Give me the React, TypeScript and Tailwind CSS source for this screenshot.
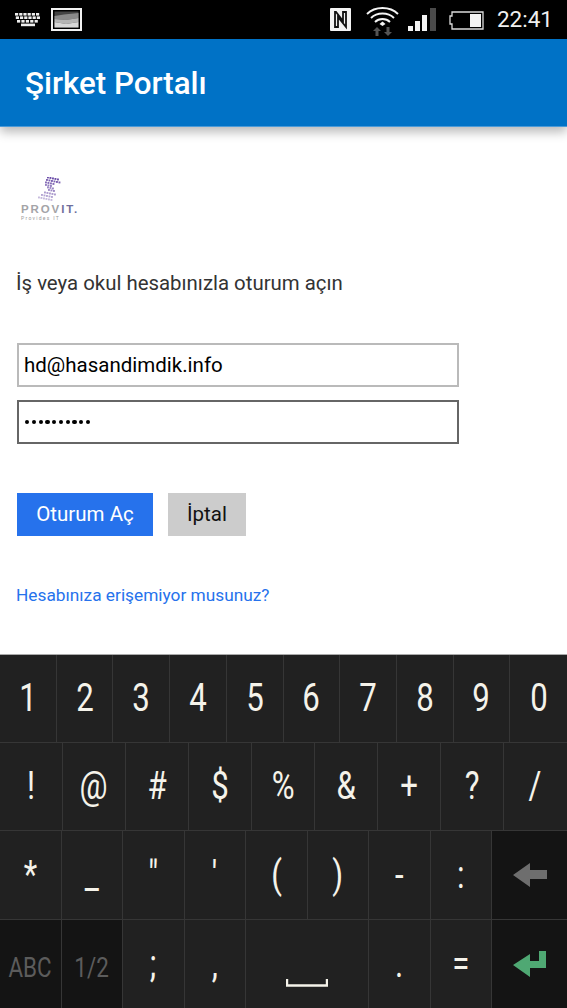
const ROW1 = ["1", "2", "3", "4", "5", "6", "7", "8", "9", "0"];
const ROW2 = ["!", "@", "#", "$", "%", "&", "+", "?", "/"];
const ROW3 = ["*", "_", '"', "'", "(", ")", "-", ":"];

function Key({ label, className = "" }: { label: React.ReactNode; className?: string }) {
  return (
    <div className={`flex items-center justify-center border-r border-[#363636] last:border-r-0 ${className}`}>
      <span className="inline-block scale-x-[0.8] text-[39px] leading-none text-[#f5f3ea]">{label}</span>
    </div>
  );
}

function KeyboardIcon() {
  const dots = [];
  for (let row = 0; row < 2; row++) {
    for (let col = 0; col < 6; col++) {
      dots.push(<rect key={`${row}-${col}`} x={col * 4.2 + row * 0.8} y={row * 3.4} width="3.2" height="2.6" fill="#eee" />);
    }
  }
  return (
    <svg width="28" height="14" viewBox="0 0 26 14">
      {dots}
      <rect x="2" y="7" width="3.2" height="2.6" fill="#eee" />
      <rect x="6.4" y="7" width="3.2" height="2.6" fill="#eee" />
      <rect x="10.8" y="7" width="3.2" height="2.6" fill="#eee" />
      <rect x="15.2" y="7" width="3.2" height="2.6" fill="#eee" />
      <rect x="19.6" y="7" width="3.2" height="2.6" fill="#eee" />
      <rect x="6" y="10.6" width="14" height="2.6" fill="#eee" />
    </svg>
  );
}

function PictureIcon() {
  return (
    <svg width="31" height="23" viewBox="0 0 31 23" className="ml-[9px]">
      <rect x="1" y="1" width="29" height="21" fill="#000" stroke="#f2f2f2" strokeWidth="2" />
      <rect x="3.5" y="3.5" width="24" height="16" fill="#444" />
      <path d="M3.5 8 L13 6.5 L27.5 5 V10 L15 12 L3.5 11 Z" fill="#8a8a8a" />
      <path d="M3.5 11 L15 12 L27.5 10 V14 L15 16 L3.5 14 Z" fill="#b5b5b5" />
      <path d="M3.5 14 L15 16 L27.5 14 V19.5 H3.5 Z" fill="#d8d8d8" />
    </svg>
  );
}

function StatusIcons() {
  return (
    <div className="flex items-center">
      {/* NFC */}
      <svg width="21" height="23" viewBox="0 0 21 23">
        <rect x="0" y="0" width="21" height="23" rx="1" fill="#f4f4f4" />
        <path d="M5 4 V19 H8 V9 L16 19 V4 H13 V13 L6 4 Z" fill="none" stroke="#111" strokeWidth="1.8" />
      </svg>
      {/* wifi + data arrows */}
      <svg width="33" height="32" viewBox="0 0 33 32" className="ml-[15px]">
        <g fill="none" stroke="#f4f4f4" strokeWidth="1.9">
          <path d="M1 10 C9 2 24 2 32 10" />
          <path d="M5 14 C11 8 22 8 28 14" />
          <path d="M9 18 C13 14 20 14 24 18" />
        </g>
        <path d="M13.5 20 L16.5 17.5 L19.5 20 L16.5 22 Z" fill="#f4f4f4" />
        <path d="M11 23 L15 27 H12.5 V32 H9.5 V27 H7 Z" fill="#555" />
        <path d="M22 32 L18 28 H20.5 V23 H23.5 V28 H26 Z" fill="#555" />
      </svg>
      {/* signal */}
      <svg width="29" height="24" viewBox="0 0 29 24" className="ml-[9px]">
        <rect x="0" y="18" width="5" height="5" fill="#f4f4f4" />
        <rect x="7" y="13" width="5" height="10" fill="#f4f4f4" />
        <rect x="14" y="7" width="5" height="16" fill="#f4f4f4" />
        <rect x="22" y="0" width="6" height="23" fill="#4a4a4a" />
      </svg>
      {/* battery */}
      <svg width="35" height="20" viewBox="0 0 35 20" className="ml-[12px]">
        <path d="M3 6 V2 H34 V19 H3 V14 H1 V6 Z" fill="none" stroke="#dcdcdc" strokeWidth="1.3" />
        <rect x="21" y="4" width="11" height="13" fill="#f4f4f4" />
      </svg>
      <span className="ml-[13px] text-[22.5px] leading-none text-[#f0f0f0]">22:41</span>
    </div>
  );
}

function ProvitLogo() {
  const dots = [];
  // S made of tilted rows of little squares, fading towards the bottom
  const rows: [number, number, number, number][] = [
    [47, 176.5, 5, 0.9], [46, 179, 6, 0.8], [45, 181.5, 4, 0.75], [45, 184, 3, 0.65],
    [47, 186.5, 3, 0.6], [48, 189, 3, 0.6], [44, 191.5, 5, 0.5], [41, 194, 5, 0.45], [38, 196.5, 6, 0.35],
  ];
  for (const [x, y, n, o] of rows) {
    for (let i = 0; i < n; i++) {
      dots.push(<rect key={`${y}-${i}`} x={x + i * 2.5} y={y + i * 0.5} width="1.9" height="1.9" fill="#5b3a9e" opacity={o} />);
    }
  }
  return (
    <div className="ml-[21px] w-[64px]">
      <svg width="30" height="24" viewBox="36 177 30 24" className="ml-[15px] block">
        {dots}
      </svg>
      <div className="mt-[4px] flex text-[11.5px] font-bold leading-[9px] tracking-[1.9px] [font-family:'Liberation_Sans',sans-serif]">
        <span className="text-[#a4a4a8]">PROV</span>
        <span className="text-[#6f6f9c]">IT.</span>
      </div>
      <div className="mt-px text-[5px] leading-[7px] tracking-[1.3px] text-[#9a9a9a]">Provides IT</div>
    </div>
  );
}

export default function App() {
  return (
    <div className="flex h-[1008px] w-[567px] flex-col overflow-hidden bg-white [font-family:Roboto,sans-serif]">
      {/* status bar */}
      <div className="flex h-[39px] items-center justify-between bg-black pl-[14px] pr-[14px]">
        <div className="flex items-center">
          <KeyboardIcon />
          <PictureIcon />
        </div>
        <StatusIcons />
      </div>

      {/* app bar */}
      <header className="relative z-10 flex h-[88px] items-center border-b border-[#4a9ad8] bg-[#0072c6] pl-[25px] pt-[3px] shadow-[0_5px_10px_rgba(0,0,0,0.28)]">
        <h1 className="text-[31.3px] font-medium leading-none text-white">Şirket Portalı</h1>
      </header>

      {/* sign in form */}
      <main className="flex flex-1 flex-col">
        <div className="mt-[50px]">
          <ProvitLogo />
        </div>
        <p className="ml-[16px] mt-[49px] text-[20.4px] leading-[24px] text-[#333333]">İş veya okul hesabınızla oturum açın</p>
        <div className="ml-[17px] mt-[48px] flex w-[442px] flex-col gap-[13px]">
          <div className="flex h-[44px] items-center border-2 border-[#bababa] pl-[5px] text-[20.5px] text-black">hd@hasandimdik.info</div>
          <div className="flex h-[44px] items-center gap-[2.6px] border-2 border-[#666666] pl-[6px]">
            {Array.from({ length: 10 }).map((_, i) => (
              <span key={i} className="h-[4.2px] w-[4.2px] rounded-full bg-black" />
            ))}
          </div>
        </div>
        <div className="ml-[17px] mt-[49px] flex gap-[15px]">
          <button className="h-[43px] w-[136px] bg-[#2672ec] text-[20.5px] text-white">Oturum Aç</button>
          <button className="h-[43px] w-[78px] bg-[#cccccc] text-[20.5px] text-[#111111]">İptal</button>
        </div>
        <a className="ml-[16px] mt-[47px] text-[17.3px] leading-[24px] text-[#2672ec]">Hesabınıza erişemiyor musunuz?</a>
      </main>

      {/* keyboard */}
      <div className="flex h-[354px] flex-col border-t border-[#aaaaaa] bg-[#212121]">
        <div className="grid h-[88px] grid-cols-10 border-b border-[#363636]">
          {ROW1.map((k) => <Key key={k} label={k} />)}
        </div>
        <div className="grid h-[88px] grid-cols-9 border-b border-[#363636]">
          {ROW2.map((k) => <Key key={k} label={k} />)}
        </div>
        <div className="grid h-[89px] grid-cols-[repeat(8,61.5px)_1fr] border-b border-[#363636]">
          {ROW3.map((k) => <Key key={k} label={k} />)}
          <div className="flex items-center justify-center bg-[#141414]">
            <svg width="34" height="24" viewBox="0 0 34 24">
              <path d="M0 12 L17 0 V7 H34 V16 H17 V24 Z" fill="#6e6e6e" />
            </svg>
          </div>
        </div>
        <div className="grid flex-1 grid-cols-[61.5px_61.5px_61.5px_61.5px_123px_61.5px_61.5px_1fr]">
          <Key label={<span className="text-[28px] text-[#5c5c5c]">ABC</span>} className="bg-[#141414]" />
          <Key label={<span className="text-[28px] text-[#5c5c5c]">1/2</span>} className="bg-[#141414]" />
          <Key label=";" />
          <Key label="," />
          <div className="flex items-end justify-center border-r border-[#363636] pb-[21px]">
            <svg width="42" height="8" viewBox="0 0 42 8">
              <path d="M1 0 V6.5 H41 V0" fill="none" stroke="#f5f3ea" strokeWidth="2.4" />
            </svg>
          </div>
          <Key label="." />
          <Key label="=" />
          <div className="flex items-center justify-center bg-[#141414]">
            <svg width="34" height="26" viewBox="0 0 34 26">
              <path d="M0 14 L17 3 V10 H26 V0 H33 V17 H17 V26 Z" fill="#4fa873" />
            </svg>
          </div>
        </div>
      </div>
    </div>
  );
}
